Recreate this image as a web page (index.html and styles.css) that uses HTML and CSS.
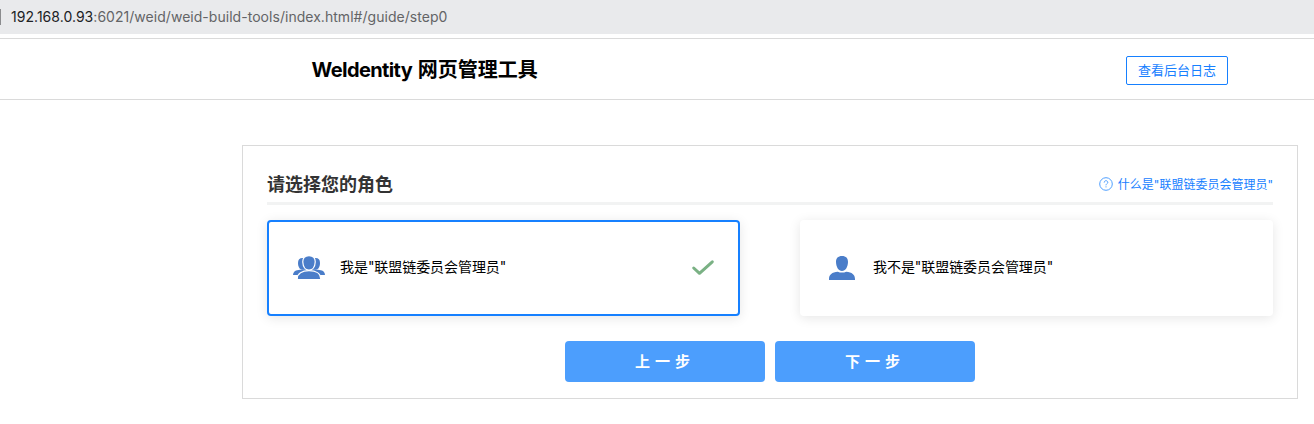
FILE: index.html
```html
<!DOCTYPE html>
<html lang="zh-CN">
<head>
<meta charset="utf-8">
<title>WeIdentity 网页管理工具</title>
<link rel="stylesheet" href="styles.css">
</head>
<body>
<div class="address-bar"><span class="caret"></span><span class="url"><span class="host">192.168.0.93</span>:6021/weid/weid-build-tools/index.html#/guide/step0</span></div>
<header class="header">
  <h1 class="title"><span class="brand">WeIdentity</span> 网页管理工具</h1>
  <button class="log-btn">查看后台日志</button>
</header>
<main class="panel">
  <div class="panel-head">
    <h2 class="heading">请选择您的角色</h2>
    <a class="help">
      <svg class="help-icon" width="14" height="14" viewBox="0 0 14 14" fill="none" stroke="currentColor"><circle cx="7" cy="7" r="6.3"/><path d="M5.2 5.6C5.2 4.4 6 3.7 7 3.7s1.8.7 1.8 1.7C8.800 6.600 7 6.700 7 8.300M7 9.300v1.100"/></svg>
      <span class="help-text">什么是"联盟链委员会管理员"</span>
    </a>
  </div>
  <div class="roles">
    <div class="role selected">
      <svg class="icon-group" width="32" height="24" viewBox="0 0 32 24">
        <g fill="#4a7dc9">
          <path d="M5 7C5 3.500 6.500 2 9.500 2h13C25.500 2 27 3.500 27 7c0 3.500-1.500 6.500-4 6.800h-14C6.500 13.500 5 10.500 5 7z"/>
          <path d="M0 19c.2-3.600 3-5 7-5.200h18c4 .2 6.800 1.600 7 5.200z"/>
        </g>
        <g fill="#4a7dc9" stroke="#fff" stroke-width="1.200">
          <path d="M16-.4c4.200 0 6.400 2.600 6.200 6.500-.2 4.600-2.600 8-6.200 8s-6-3.400-6.200-8C9.600 2.200 11.800-.4 16-.4z"/>
          <path d="M4.300 23.500v-1C4.300 17.400 9 14.700 16 14.700s11.700 2.700 11.700 7.800v1z"/>
        </g>
      </svg>
      <span class="role-name">我是"联盟链委员会管理员"</span>
      <svg class="check" width="24" height="18" viewBox="0 0 24 18" fill="none" stroke="#7ab184" stroke-width="3" stroke-linecap="round" stroke-linejoin="round"><path d="M2.700 9l5.800 5.300L21.300 2.800"/></svg>
    </div>
    <div class="role">
      <svg class="icon-user" width="26" height="24" viewBox="0 0 26 24" fill="#4a7dc9"><path d="M13 0c4 0 6.100 2.300 6 6-.1 5-2.600 9-6 9S7.100 11 7 6c-.1-3.700 2-6 6-6z"/><path d="M0 24v-1c0-4.500 3-6.800 8.800-7.300 2.500 1.200 5.900 1.200 8.400 0C23 16.200 26 18.500 26 23v1z"/></svg>
      <span class="role-name">我不是"联盟链委员会管理员"</span>
    </div>
  </div>
  <div class="actions"><button class="step-btn">上一步</button><button class="step-btn">下一步</button></div>
</main>
</body>
</html>
```
FILE: styles.css
```css
* { box-sizing: border-box; }
body { margin: 0; background: #fff; color: #000; font-family: "Liberation Sans", "Noto Sans CJK SC", sans-serif; }
button { font-family: inherit; margin: 0; padding: 0; }
.address-bar { height: 34px; display: flex; align-items: center; background: #e9eaec; }
.caret { width: 1px; height: 16px; background: #8b8c8e; margin-right: 10px; }
.url { font: 14px/20px Inter, sans-serif; letter-spacing: .035px; color: #636466; white-space: nowrap; }
.host { color: #202124; }
.header { height: 62px; margin-top: 4px; padding: 0 86px 0 311.500px; display: flex; align-items: center; justify-content: space-between; border-top: 1px solid #dadada; border-bottom: 1px solid #dadada; }
.title { margin: 0; padding-top: 2px; font-size: 20px; line-height: 28px; font-weight: 700; white-space: nowrap; }
.brand { font-family: Inter, sans-serif; letter-spacing: -.62px; }
.log-btn { width: 102px; height: 29px; margin-top: 2px; padding-bottom: 1px; border: 1px solid #1680ff; border-radius: 2px; background: #fff; color: #1680ff; font-size: 13px; }
.panel { width: 1056px; height: 254px; margin: 45px 0 0 242px; padding: 24px 24px 0; border: 1px solid #dadada; }
.panel-head { height: 35px; display: flex; justify-content: space-between; border-bottom: 3px solid #f2f3f3; }
.heading { margin: 0; padding-top: 1px; font-size: 18px; line-height: 28px; font-weight: 700; color: #333; }
.help { height: 28px; display: flex; align-items: center; gap: 5px; color: #1680ff; font-size: 12px; white-space: nowrap; }
.help-icon { opacity: .75; }
.help-text { font-family: Inter, "Noto Sans CJK SC", sans-serif; line-height: 18px; margin-top: 1px; }
.roles { display: flex; justify-content: space-between; margin-top: 15px; }
.role { width: 473px; height: 96px; padding: 0 28px 0 29px; display: flex; align-items: center; border-radius: 4px; background: #fff; box-shadow: 0 2px 12px rgba(0,0,0,.1); }
.role.selected { padding: 0 23px 0 24px; border: 2px solid #1680ff; }
.role-name { font-family: Inter, "Noto Sans CJK SC", sans-serif; font-size: 14px; line-height: 20px; margin-top: -2px; letter-spacing: -.06px; white-space: nowrap; }
.icon-group { margin-right: 15px; }
.icon-user { margin-right: 18px; }
.check { margin-left: auto; }
.actions { display: flex; justify-content: center; gap: 10px; margin-top: 25px; }
.step-btn { width: 200px; height: 41px; padding-bottom: 2px; border: 0; border-radius: 4px; background: #4c9efd; color: #fff; font-size: 15px; font-weight: 700; letter-spacing: 5px; }
```
